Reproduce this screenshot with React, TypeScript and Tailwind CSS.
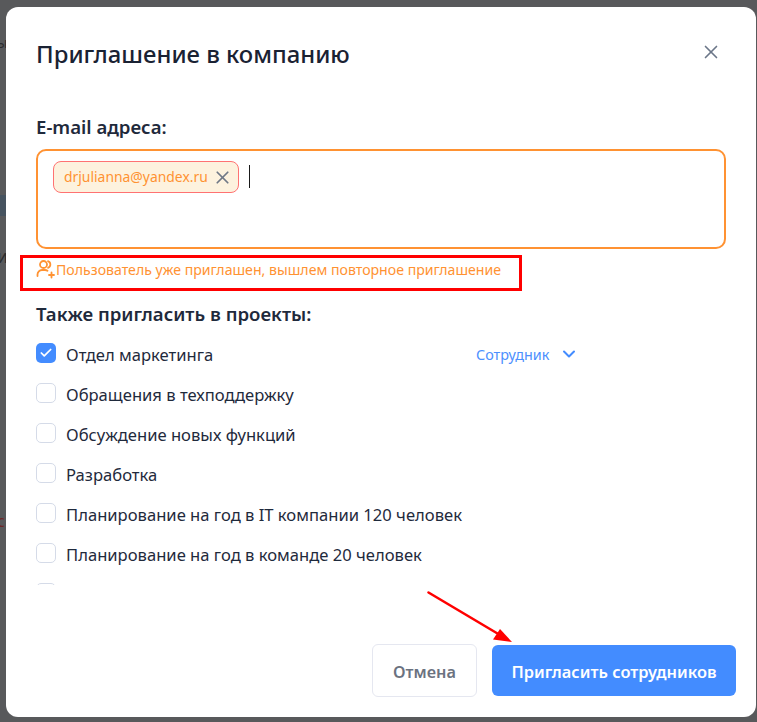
import { X, Check, ChevronDown } from "lucide-react";

const projects = [
  "Обращения в техподдержку",
  "Обсуждение новых функций",
  "Разработка",
  "Планирование на год в IT компании 120 человек",
  "Планирование на год в команде 20 человек",
  "",
];

const App = () => {
  return (
    <div className="relative h-[722px] w-[757px] overflow-hidden bg-[#58595b] pl-[6px] pt-[7px] font-['Noto_Sans','Open_Sans',sans-serif]">
      {/**Page behind the overlay */}
      <div className="absolute left-[-3px] top-[35px] text-[14px] leading-4 text-[#2b2c2e]">ы</div>
      <div className="absolute left-0 top-[195px] h-[21px] w-[6px] bg-[#46535f]" />
      <div className="absolute left-[-3px] top-[246px] text-[18px] leading-5 text-[#2b2c2e]">и</div>
      <div className="absolute left-[-3px] top-[511px] text-[16px] leading-5 text-[#6e2626]">с</div>

      {/**Modal */}
      <div className="relative flex h-[710px] w-[750px] flex-col rounded-[12px] bg-white pl-[30px] pr-[20px]">
        <div className="flex h-[94px] items-start justify-between pt-[30px]">
          <h1 className="text-[23.85px] font-medium leading-[34px] text-[#1a2233]">Приглашение в компанию</h1>
          <X className="mr-[14px] mt-[4px] h-[22px] w-[22px] text-[#6b7688]" strokeWidth={1.8} />
        </div>

        <div className="mt-[14px] text-[18.6px] font-semibold leading-6 text-[#1f2a3c]">E-mail адреса:</div>

        <div className="mt-[10px] flex h-[100px] w-[690px] items-start rounded-[10px] border-2 border-[#ff9232] pl-[15px] pt-[10px]">
          <div className="flex h-[32px] w-[186px] items-center rounded-[8px] border border-[#ff7272] bg-[#fdf2de] pl-[10px]">
            <span className="text-[13.9px] leading-5 text-[#ff9232]">drjulianna@yandex.ru</span>
            <X className="ml-[4px] h-[21px] w-[21px] text-[#6f7886]" strokeWidth={2} />
          </div>
          <div className="ml-[10px] mt-[4px] h-[23px] w-px bg-[#1a1a1a]" />
        </div>

        <div className="mt-[10px] flex h-5 items-center text-[14.13px] text-[#ff9232]">
          <svg className="h-[20px] w-[20px] shrink-0" viewBox="0 0 20 20" fill="none" stroke="currentColor" strokeWidth="1.8" strokeLinecap="round">
            <circle cx="7.5" cy="5.5" r="3.5" />
            <path d="M1.5 17v-1.5a4.5 4.5 0 0 1 4.5-4.5h3a4.5 4.5 0 0 1 2.5.8" />
            <path d="M12 2.2a3.5 3.5 0 0 1 0 6.6" />
            <path d="M15.5 13.5v5M13 16h5" />
          </svg>
          <span className="pt-[2px]">Пользователь уже приглашен, вышлем повторное приглашение</span>
        </div>

        <div className="mt-[23px] text-[18.6px] font-semibold leading-6 text-[#1f2a3c]">Также пригласить в проекты:</div>

        {/**Project list */}
        <div className="mt-[17px] flex h-[242px] flex-col gap-5 overflow-hidden">
          <div className="flex h-5 shrink-0 items-center">
            <span className="flex h-5 w-5 items-center justify-center rounded-[5px] bg-[#438cff]">
              <Check className="h-[14px] w-[14px] text-white" strokeWidth={3} />
            </span>
            <span className="ml-[10px] w-[410px] pt-[4px] text-[16.6px] leading-5 text-[#1f2a3c]">Отдел маркетинга</span>
            <span className="pt-[4px] text-[14.4px] leading-5 text-[#4d90fe]">Сотрудник</span>
            <ChevronDown className="ml-[10px] mt-[2px] h-[20px] w-[20px] text-[#438cff]" strokeWidth={2.4} />
          </div>
          {projects.map((name, i) => (
            <div key={i} className="flex h-5 shrink-0 items-center">
              <span className="h-5 w-5 rounded-[5px] border border-[#d5dbe8] bg-white" />
              <span className="ml-[10px] pt-[4px] text-[16.6px] leading-5 text-[#1f2a3c]">{name}</span>
            </div>
          ))}
        </div>

        {/**Footer */}
        <div className="mt-[59px] flex items-start justify-end gap-[15px]">
          <button className="h-[53px] w-[105px] rounded-[6px] border border-[#e5e7f0] bg-white pt-[3px] text-[16.3px] font-semibold text-[#6b7280]">Отмена</button>
          <button className="mt-px h-[51px] w-[244px] rounded-[6px] bg-[#438cff] pt-[3px] text-[16.4px] font-semibold text-white">Пригласить сотрудников</button>
        </div>
      </div>

      {/**Annotations */}
      <div className="absolute left-[20px] top-[255px] h-[36px] w-[502px] border-[3px] border-[#ff0000]" />
      <svg className="absolute left-[420px] top-[585px]" width="100" height="65" viewBox="0 0 100 65" fill="none">
        <path d="M8.5 7.5L80 50" stroke="#ff0000" strokeWidth="2.6" strokeLinecap="round" />
        <path d="M92 57L73 54.5L80 44Z" fill="#ff0000" />
      </svg>
    </div>
  );
};

export default App;
